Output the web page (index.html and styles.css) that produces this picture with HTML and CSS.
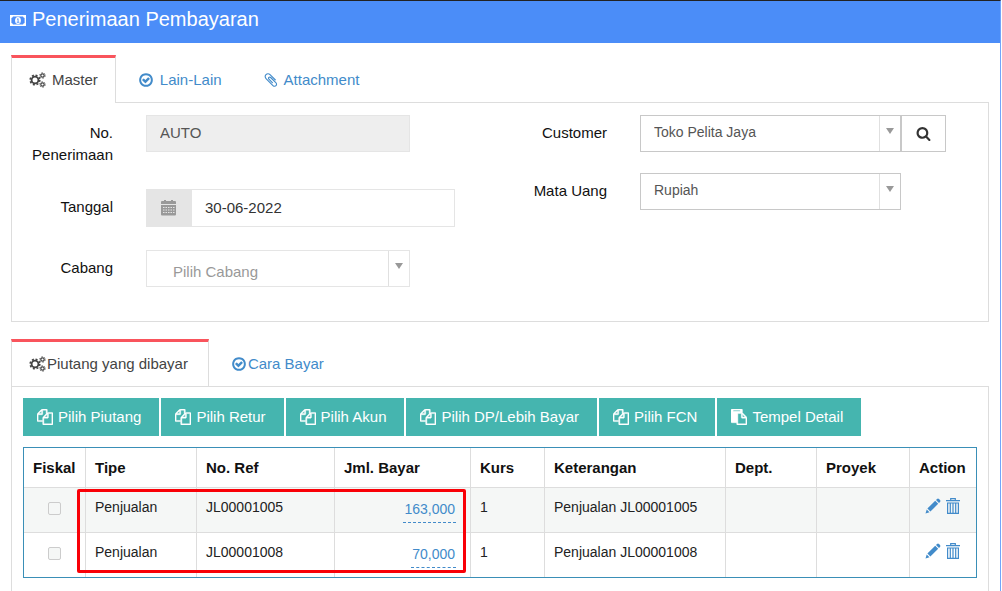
FILE: index.html
```html
<!DOCTYPE html>
<html lang="id">
<head>
<meta charset="UTF-8">
<meta name="viewport" content="width=device-width, initial-scale=1.0">
<title>Penerimaan Pembayaran</title>
<link rel="stylesheet" href="styles.css">
</head>
<body>
<svg class="sprite" aria-hidden="true">
    <symbol id="i-money" viewBox="0 0 16 11">
        <path fill="none" stroke="currentColor" stroke-width="1.400" d="M.7.7h14.600v9.600H.7z"/>
        <path fill="currentColor" d="M1 1h2a2 2 0 0 1-2 2zM15 1h-2a2 2 0 0 0 2 2zM1 10h2a2 2 0 0 0-2-2zM15 10h-2a2 2 0 0 1 2-2z"/>
        <ellipse cx="8" cy="5.500" rx="2.900" ry="3.500" fill="currentColor"/>
        <path fill="none" stroke="#4b8df8" stroke-width=".9" d="M7 4.500l1.100-.9v3.400M6.800 7.300h2.600"/>
    </symbol>
    <symbol id="i-cogs" viewBox="0 0 17 16">
        <g fill="none" stroke="currentColor">
            <circle cx="6" cy="8" r="3.400" stroke-width="1.800"/>
            <circle cx="6" cy="8" r="4.800" stroke-width="1.600" stroke-dasharray="2 1.770"/>
            <circle cx="13.500" cy="3.500" r="1.700" stroke-width="1.200"/>
            <circle cx="13.500" cy="3.500" r="2.700" stroke-width="1" stroke-dasharray="1.300 1.527"/>
            <circle cx="13.500" cy="12.500" r="1.700" stroke-width="1.200"/>
            <circle cx="13.500" cy="12.500" r="2.700" stroke-width="1" stroke-dasharray="1.300 1.527"/>
        </g>
    </symbol>
    <symbol id="i-check" viewBox="0 0 1792 1792">
        <path fill="currentColor" d="M1299 813l-422 422q-19 19-45 19t-45-19l-294-294q-19-19-19-45t19-45l102-102q19-19 45-19t45 19l147 147 275-275q19-19 45-19t45 19l102 102q19 19 19 45t-19 45zm141 83q0-148-73-273t-198-198-273-73-273 73-198 198-73 273 73 273 198 198 273 73 273-73 198-198 73-273zm224 0q0 209-103 385.500t-279.500 279.500-385.500 103-385.500-103-279.500-279.500-103-385.500 103-385.500 279.500-279.500 385.500-103 385.500 103 279.500 279.500 103 385.500z"/>
    </symbol>
    <symbol id="i-clip" viewBox="128 0 1568 1792">
        <path fill="currentColor" d="M1596 1385q0 117-79 196t-196 79q-135 0-235-100l-777-776q-113-115-113-271 0-159 110-270t269-111q158 0 273 113l605 606q10 10 10 22 0 16-30.500 46.500t-46.500 30.500q-13 0-23-10l-606-607q-79-77-181-77-106 0-179 75t-73 181q0 105 76 181l776 777q63 63 145 63 64 0 106-42t42-106q0-82-63-145l-581-581q-26-24-60-24-29 0-48 19t-19 48q0 32 25 59l410 410q10 10 10 22 0 16-31 47t-47 31q-12 0-22-10l-410-410q-63-61-63-149 0-82 57-139t139-57q88 0 149 63l581 581q100 98 100 235z"/>
    </symbol>
    <symbol id="i-copy" viewBox="0 0 1792 1792">
        <path fill="currentColor" stroke="currentColor" stroke-width="50" d="M1696 384q40 0 68 28t28 68v1216q0 40-28 68t-68 28h-960q-40 0-68-28t-28-68v-288h-544q-40 0-68-28t-28-68v-672q0-40 20-88t48-76l408-408q28-28 76-48t88-20h416q40 0 68 28t28 68v328q68-40 128-40h416zm-544 213l-299 299h299v-299zm-640-384l-299 299h299v-299zm196 647l316-316v-416h-384v416q0 40-28 68t-68 28h-416v640h512v-256q0-40 20-88t48-76zm956 804v-1152h-384v416q0 40-28 68t-68 28h-416v640h896z"/>
    </symbol>
    <symbol id="i-paste" viewBox="0 0 1792 1792">
        <path fill="currentColor" stroke="currentColor" stroke-width="50" d="M768 1664h896v-640h-416q-40 0-68-28t-28-68v-416h-384v1152zm256-1440v-64q0-13-9.500-22.500t-22.500-9.500h-704q-13 0-22.500 9.500t-9.500 22.500v64q0 13 9.500 22.500t22.500 9.500h704q13 0 22.500-9.500t9.500-22.500zm256 672h299l-299-299v299zm512 128v672q0 40-28 68t-68 28h-960q-40 0-68-28t-28-68v-160h-544q-40 0-68-28t-28-68v-1344q0-40 28-68t68-28h1088q40 0 68 28t28 68v328q21 13 36 28l408 408q28 28 48 76t20 88z"/>
    </symbol>
    <symbol id="i-search" viewBox="0 0 1792 1792">
        <path fill="currentColor" d="M1216 832q0-185-131.500-316.500t-316.500-131.500-316.500 131.500-131.500 316.500 131.500 316.500 316.500 131.500 316.500-131.500 131.500-316.500zm512 832q0 52-38 90t-90 38q-54 0-90-38l-343-342q-179 124-399 124-143 0-273.500-55.500t-225-150-150-225-55.500-273.500 55.500-273.500 150-225 225-150 273.500-55.500 273.500 55.500 225 150 150 225 55.500 273.500q0 220-124 399l343 343q37 37 37 90z"/>
    </symbol>
    <symbol id="i-calendar" viewBox="0 0 15 16">
        <path fill="currentColor" d="M0 2q0-1 1-1h2V0h2v1h5V0h2v1h2q1 0 1 1v2H0zM0 5h15v9.500q0 1-1 1H1q-1 0-1-1z"/>
        <path stroke="#e5e5e5" stroke-dasharray="1.500 1" d="M2 7.500h11.500M2 10h11.500M2 12.500h11.500"/>
    </symbol>
    <symbol id="i-pencil" viewBox="0 0 16 16">
        <path fill="currentColor" d="M.5 15.500l1.200-4 2.800 2.800zM2.400 10.600L10.200 2.800l3 3-7.800 7.800zM11 2l1-1q1-.9 2 0l1 1q.9 1 0 2l-1 1z"/>
    </symbol>
    <symbol id="i-trash" viewBox="0 0 14 16">
        <path fill="none" stroke="currentColor" stroke-width="1.200" d="M0 2.600h14M4.700 2.500V.7h4.600v1.800M1.600 5h10.800v10.300H1.600z"/>
        <path stroke="currentColor" stroke-width="1.200" d="M4.300 5v10M7 5v10M9.700 5v10"/>
    </symbol>
</svg>

<div class="page">
    <header class="title-bar">
        <svg class="icon icon-money"><use href="#i-money"/></svg>
        <h1>Penerimaan Pembayaran</h1>
    </header>

    <section class="tab-box">
        <nav class="tabs">
            <a href="#master" class="tab active"><svg class="icon icon-cogs"><use href="#i-cogs"/></svg>Master</a>
            <a href="#lain" class="tab"><svg class="icon"><use href="#i-check"/></svg>Lain-Lain</a>
            <a href="#attachment" class="tab"><svg class="icon icon-clip"><use href="#i-clip"/></svg>Attachment</a>
        </nav>
        <form class="panel form" id="master">
            <div class="form-col">
                <div class="form-row">
                    <label for="nomor">No. Penerimaan</label>
                    <input class="control" type="text" id="nomor" value="AUTO" readonly>
                </div>
                <div class="form-row">
                    <label for="tanggal">Tanggal</label>
                    <div class="date-group">
                        <span class="addon"><svg class="icon icon-calendar"><use href="#i-calendar"/></svg></span>
                        <input class="control" type="text" id="tanggal" value="30-06-2022">
                    </div>
                </div>
                <div class="form-row">
                    <label for="cabang">Cabang</label>
                    <div class="select-box select-empty">
                        <select id="cabang"><option>Pilih Cabang</option></select>
                    </div>
                </div>
            </div>
            <div class="form-col form-col-right">
                <div class="form-row">
                    <label for="customer">Customer</label>
                    <div class="search-group">
                        <div class="select-box">
                            <select id="customer"><option>Toko Pelita Jaya</option></select>
                        </div>
                        <button type="button" class="btn-search" aria-label="Cari customer"><svg class="icon icon-search"><use href="#i-search"/></svg></button>
                    </div>
                </div>
                <div class="form-row">
                    <label for="matauang">Mata Uang</label>
                    <div class="select-box">
                        <select id="matauang"><option>Rupiah</option></select>
                    </div>
                </div>
            </div>
        </form>
    </section>

    <section class="tab-box tab-box-detail">
        <nav class="tabs tabs-tight">
            <a href="#piutang" class="tab active"><svg class="icon icon-cogs"><use href="#i-cogs"/></svg>Piutang yang dibayar</a>
            <a href="#cara" class="tab"><svg class="icon"><use href="#i-check"/></svg>Cara Bayar</a>
        </nav>
        <div class="panel detail" id="piutang">
            <div class="toolbar">
                <button type="button" class="btn"><svg class="icon"><use href="#i-copy"/></svg>Pilih Piutang</button>
                <button type="button" class="btn"><svg class="icon"><use href="#i-copy"/></svg>Pilih Retur</button>
                <button type="button" class="btn"><svg class="icon"><use href="#i-copy"/></svg>Pilih Akun</button>
                <button type="button" class="btn"><svg class="icon"><use href="#i-copy"/></svg>Pilih DP/Lebih Bayar</button>
                <button type="button" class="btn"><svg class="icon"><use href="#i-copy"/></svg>Pilih FCN</button>
                <button type="button" class="btn"><svg class="icon"><use href="#i-paste"/></svg>Tempel Detail</button>
            </div>
            <div class="table-wrap">
                <table class="table">
                    <colgroup>
                        <col class="c-fiskal"><col class="c-tipe"><col class="c-ref"><col class="c-bayar"><col class="c-kurs"><col><col class="c-dept"><col class="c-proyek"><col class="c-action">
                    </colgroup>
                    <thead>
                        <tr>
                            <th>Fiskal</th>
                            <th>Tipe</th>
                            <th>No. Ref</th>
                            <th>Jml. Bayar</th>
                            <th>Kurs</th>
                            <th>Keterangan</th>
                            <th>Dept.</th>
                            <th>Proyek</th>
                            <th>Action</th>
                        </tr>
                    </thead>
                    <tbody>
                        <tr>
                            <td class="check"><input type="checkbox" aria-label="Fiskal JL00001005" disabled></td>
                            <td>Penjualan</td>
                            <td>JL00001005</td>
                            <td class="amount"><a href="#bayar">163,000</a></td>
                            <td>1</td>
                            <td>Penjualan JL00001005</td>
                            <td></td>
                            <td></td>
                            <td class="action">
                                <a href="#edit" aria-label="Edit"><svg class="icon"><use href="#i-pencil"/></svg></a>
                                <a href="#hapus" aria-label="Hapus"><svg class="icon"><use href="#i-trash"/></svg></a>
                            </td>
                        </tr>
                        <tr>
                            <td class="check"><input type="checkbox" aria-label="Fiskal JL00001008" disabled></td>
                            <td>Penjualan</td>
                            <td>JL00001008</td>
                            <td class="amount"><a href="#bayar">70,000</a></td>
                            <td>1</td>
                            <td>Penjualan JL00001008</td>
                            <td></td>
                            <td></td>
                            <td class="action">
                                <a href="#edit" aria-label="Edit"><svg class="icon"><use href="#i-pencil"/></svg></a>
                                <a href="#hapus" aria-label="Hapus"><svg class="icon"><use href="#i-trash"/></svg></a>
                            </td>
                        </tr>
                    </tbody>
                </table>
                <div class="highlight"></div>
            </div>
        </div>
    </section>
</div>
</body>
</html>
```
FILE: styles.css
```css
* {
    box-sizing: border-box;
}
body {
    margin: 0;
    font-family: "Liberation Sans", Arial, sans-serif;
    font-size: 15px;
    line-height: 22px;
    color: #222;
    background: #fff;
}
input, select, button {
    font-family: inherit;
    font-size: 15px;
    border-radius: 0;
    margin: 0;
}
a {
    color: #428bca;
    text-decoration: none;
}
.sprite {
    display: none;
}
.icon {
    width: 16px;
    height: 16px;
    flex: none;
}
.page {
    display: flex;
    flex-direction: column;
    min-height: 100vh;
    margin-right: 1px;
    border-top: 1px solid #222;
    border-right: 1px solid #72a5fa;
}

/* title */
.title-bar {
    display: flex;
    align-items: center;
    gap: 6px;
    height: 42px;
    padding: 0 10px 6px;
    background: #4b8df8;
    color: #fff;
}
.title-bar h1 {
    margin: 0;
    font-size: 20px;
    font-weight: normal;
}
.icon-money {
    height: 11px;
    margin-top: 3px;
}

/* tabs */
.tab-box {
    margin: 12px 11px 0;
}
.tab-box-detail {
    display: flex;
    flex-direction: column;
    flex: 1;
    margin-top: 17px;
}
.tabs {
    display: flex;
    gap: 2px;
    margin-bottom: -1px;
}
.tab {
    display: flex;
    align-items: center;
    gap: 6px;
    height: 48px;
    padding: 1px 20px 0;
}
.tabs-tight .tab {
    gap: 1px;
}
.tab.active {
    padding: 0 17px 2px;
    background: #fff;
    border: 1px solid #ddd;
    border-top: 3px solid #f9545c;
    border-bottom: 0;
    color: #444;
}
.tabs-tight .tab.active {
    padding-right: 20px;
}
.icon-cogs {
    width: 17px;
}
.icon-clip {
    width: 14px;
}
.panel {
    border: 1px solid #ddd;
}

/* form */
.form {
    display: grid;
    grid-template-columns: 1fr 1fr;
    gap: 12px;
    padding: 12px 0 34px;
}
.form-col {
    display: flex;
    flex-direction: column;
    gap: 23px;
}
.form-col-right {
    gap: 21px;
}
.form-row {
    display: grid;
    grid-template-columns: 101px 1fr;
    gap: 33px;
    align-items: start;
}
.form-row label {
    padding: 7px 0 0 16px;
    text-align: right;
    color: #111;
}
.control {
    width: 264px;
    height: 38px;
    padding: 0 13px 2px;
    border: 1px solid #e5e5e5;
    color: #333;
}
.control[readonly] {
    height: 37px;
    background: #eee;
    color: #555;
}
.date-group, .search-group {
    display: flex;
}
.addon {
    display: flex;
    align-items: center;
    justify-content: center;
    width: 45px;
    background: #e5e5e5;
    color: #999;
}
.icon-calendar {
    width: 15px;
}
.select-box {
    position: relative;
    width: 261px;
    height: 37px;
}
.select-box select {
    appearance: none;
    width: 100%;
    height: 100%;
    padding: 0 30px 3px 13px;
    border: 1px solid #c8c8c8;
    background: #fff;
    font-size: 14px;
    color: #555;
}
/* arrow column */
.select-box::before {
    content: "";
    position: absolute;
    top: 1px;
    bottom: 1px;
    right: 1px;
    width: 20px;
    border-left: 1px solid #e0e0e0;
    pointer-events: none;
}
.select-box::after {
    content: "";
    position: absolute;
    top: 13px;
    right: 7px;
    border: 4px solid transparent;
    border-top: 6px solid #999;
    border-bottom: 0;
    pointer-events: none;
}
.select-empty {
    width: 264px;
}
.select-box.select-empty select {
    padding: 5px 30px 0 26px;
    border-color: #e5e5e5;
    font-size: 15px;
    color: #999;
}
.btn-search {
    display: flex;
    align-items: center;
    justify-content: center;
    width: 45px;
    padding: 0;
    border: 1px solid #c8c8c8;
    background: #fff;
    color: #333;
}
.icon-search {
    width: 15px;
    height: 15px;
}

/* detail */
.detail {
    flex: 1;
    padding: 11px 11px 13px;
    border-bottom: 0;
}
.toolbar {
    display: flex;
    gap: 2px;
    margin-bottom: 11px;
}
.btn {
    display: flex;
    align-items: center;
    gap: 5px;
    height: 38px;
    padding: 0 18px 1px 14px;
    border: 0;
    background: #45b5af;
    color: #fff;
}
.table-wrap {
    position: relative;
    border: 1px solid #3a8fb7;
}
.table {
    width: 100%;
    table-layout: fixed;
    border-spacing: 0;
}
.c-fiskal { width: 62px; }
.c-tipe { width: 111px; }
.c-ref { width: 138px; }
.c-bayar { width: 136px; }
.c-kurs { width: 74px; }
.c-dept { width: 91px; }
.c-proyek { width: 93px; }
.c-action { width: 66px; }
.table th, .table td {
    padding: 8px 9px;
    border-right: 1px solid #ddd;
    border-bottom: 1px solid #ddd;
    text-align: left;
    vertical-align: top;
}
.table th {
    height: 40px;
    padding-top: 9px;
    color: #111;
}
.table td {
    height: 45px;
    font-size: 14px;
}
.table th:last-child, .table td:last-child {
    border-right: 0;
}
.table tr:last-child td {
    height: 44px;
    border-bottom: 0;
}
.table tbody tr:first-child td {
    background: #f5f7f6;
}
.table .check {
    padding: 0 0 4px;
    text-align: center;
    vertical-align: middle;
}
.check input {
    appearance: none;
    display: block;
    width: 13px;
    height: 13px;
    margin: 0 auto;
    border: 1px solid #ccc;
    border-radius: 2px;
    background: #f5f7f6;
}
.table .amount {
    padding-right: 14px;
    text-align: right;
}
.amount a {
    display: inline-block;
    padding: 0 1px;
    line-height: 26px;
    border-bottom: 1px dashed #428bca;
}
.table .action {
    padding: 10px 0;
    text-align: center;
    line-height: 16px;
    white-space: nowrap;
}
.action .icon {
    vertical-align: top;
}
.highlight {
    position: absolute;
    top: 41px;
    left: 53px;
    width: 389px;
    height: 84px;
    border: 3px solid #f90007;
    border-radius: 2px;
    pointer-events: none;
}
```
